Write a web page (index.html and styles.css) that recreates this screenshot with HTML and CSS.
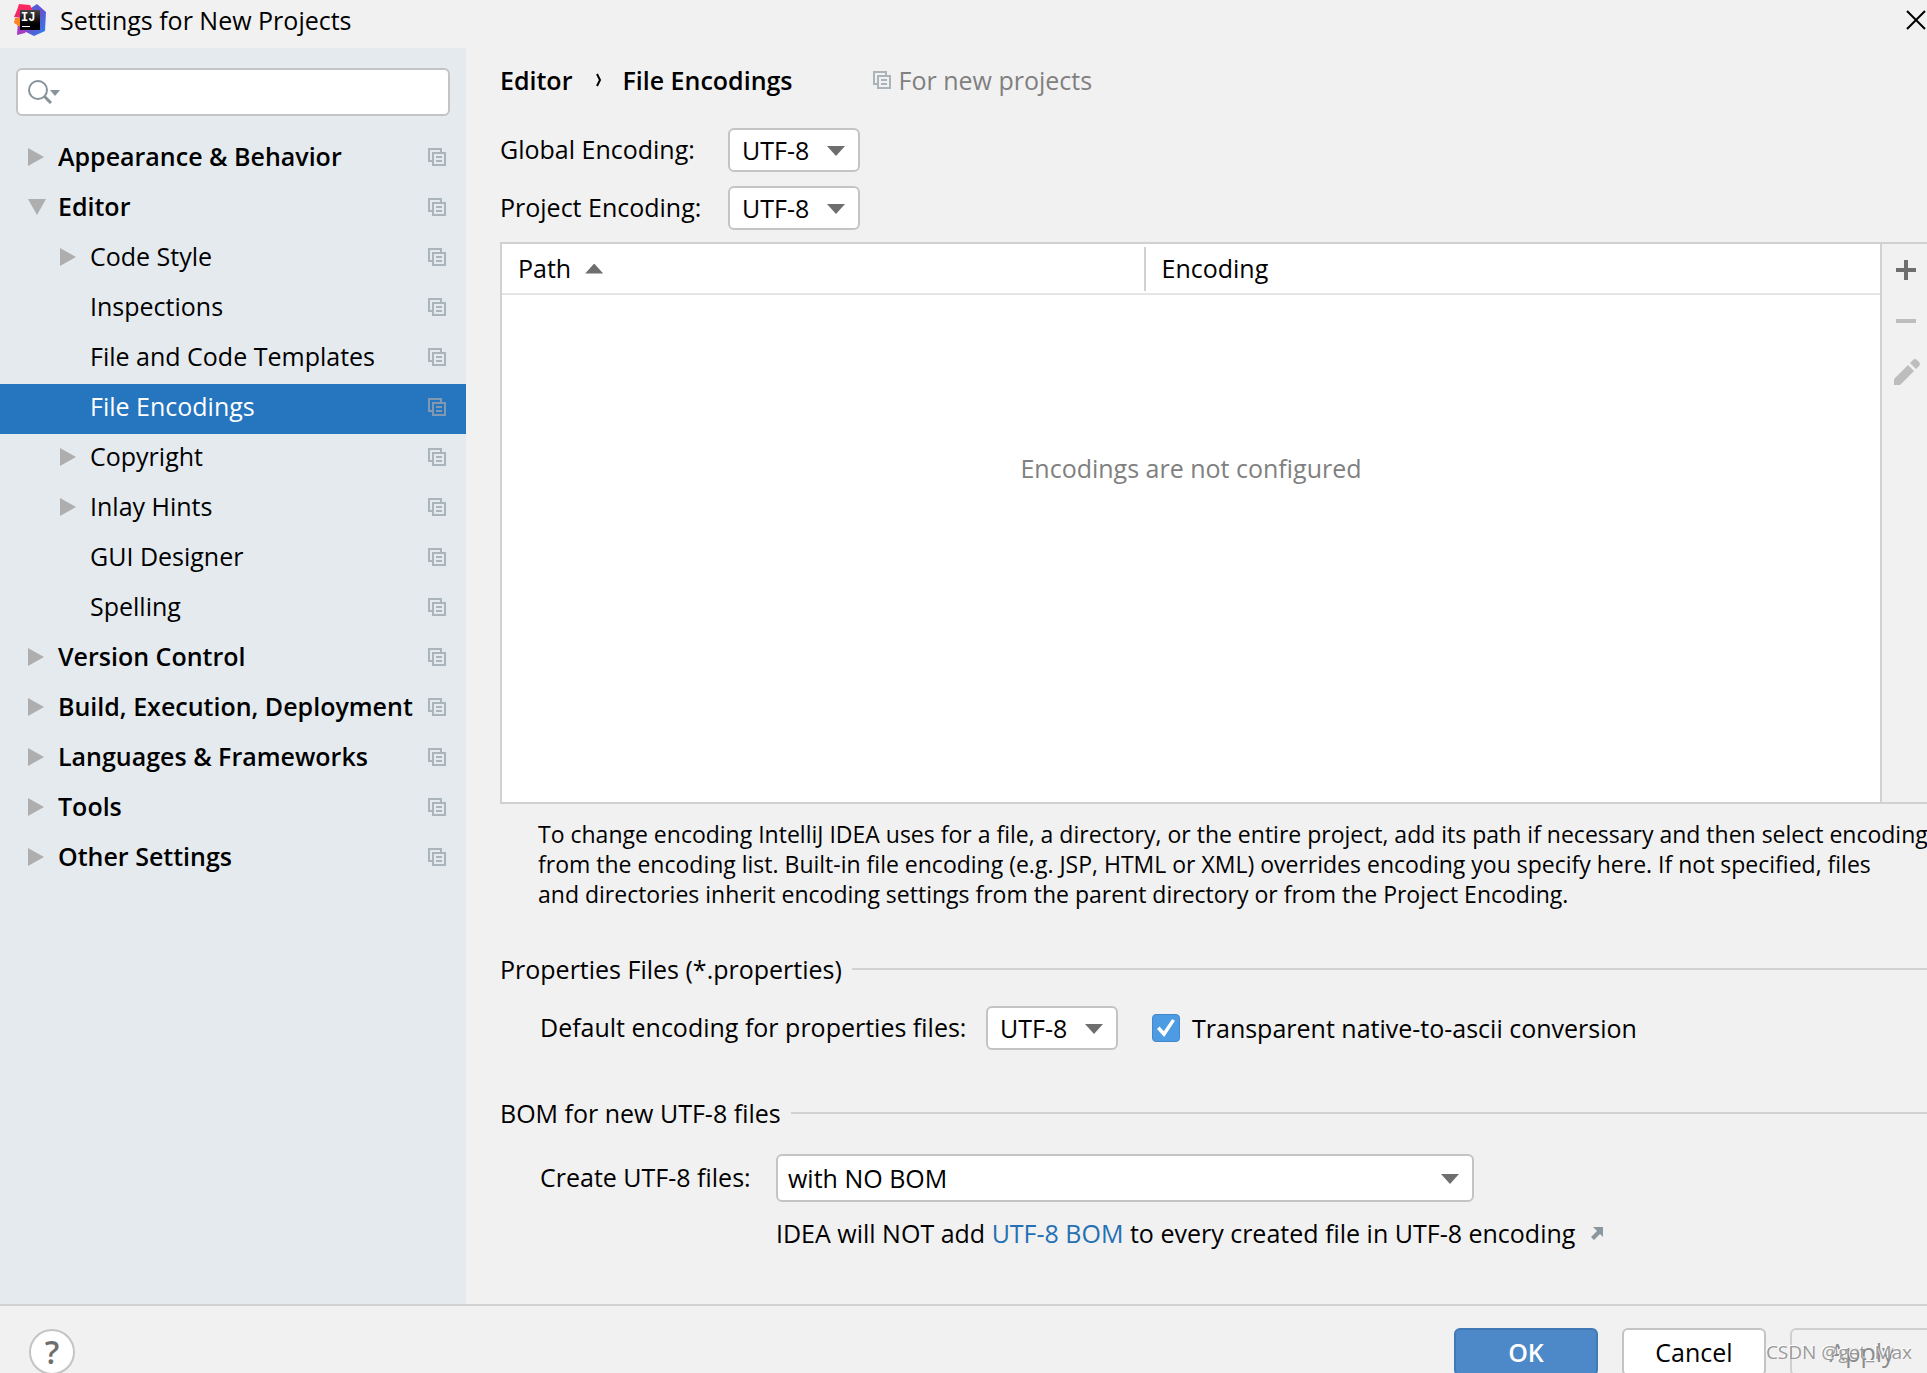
FILE: index.html
```html
<!DOCTYPE html>
<html lang="en">
<head>
<meta charset="utf-8">
<title>Settings for New Projects</title>
<link rel="stylesheet" href="styles.css">
</head>
<body>
<svg class="defs" aria-hidden="true">
  <symbol id="copy" viewBox="0 0 18 18">
    <path d="M13 4V1H1V13H4" fill="none" stroke="currentColor" stroke-width="2"/>
    <path d="M5 5H17V17H5ZM8 9H14M8 13H14" fill="none" stroke="currentColor" stroke-width="2"/>
  </symbol>
</svg>

<header class="titlebar">
  <svg class="logo" viewBox="0 0 32 32" aria-hidden="true">
    <defs>
      <linearGradient id="lgBlue" x1="0" y1="0" x2="1" y2="1"><stop offset="0" stop-color="#3b6be8"/><stop offset=".5" stop-color="#6a50d0"/><stop offset="1" stop-color="#1f86ee"/></linearGradient>
      <linearGradient id="lgRed" x1="0" y1="0" x2="0" y2="1"><stop offset="0" stop-color="#ff2a5c"/><stop offset="1" stop-color="#f0246e"/></linearGradient>
      <linearGradient id="lgBlack" x1="0" y1="0" x2="0" y2="1"><stop offset="0" stop-color="#444"/><stop offset=".7" stop-color="#000"/></linearGradient>
    </defs>
    <path d="M23 0L32 8L31 27L20 32L10 27L14 6Z" fill="url(#lgBlue)"/>
    <path d="M4 18L14 25L11 29L3 31Z" fill="#a63cc4"/>
    <path d="M1 14L8 14V24L0 19Z" fill="#fb8522"/>
    <path d="M5 0L16 1L19 7L8 14L0 13L3 6Z" fill="url(#lgRed)"/>
    <rect x="6" y="6" width="20" height="20" fill="url(#lgBlack)"/>
    <text x="7" y="17" class="logo-text">IJ</text>
    <rect x="8" y="22" width="8" height="1" fill="#fff"/>
  </svg>
  <h1 class="title">Settings for New Projects</h1>
  <button class="close" aria-label="Close">
    <svg width="20" height="20" viewBox="0 0 20 20"><path d="M1 1L19 19M19 1L1 19" stroke="#000" stroke-width="2"/></svg>
  </button>
</header>

<div class="body">
  <aside class="sidebar">
    <div class="search">
      <svg class="search-icon" width="32" height="24" viewBox="0 0 32 24" aria-hidden="true">
        <circle cx="10" cy="10" r="9" fill="none" stroke="#87939a" stroke-width="2"/>
        <path d="M16 16L23 23" stroke="#87939a" stroke-width="3"/>
        <path d="M22 10H32L27 16Z" fill="#87939a"/>
      </svg>
      <input class="search-input" type="text" aria-label="Search settings">
    </div>
    <nav class="tree">
      <a href="#" class="row group"><span class="arrow"></span><span class="name">Appearance &amp; Behavior</span><svg class="copy"><use href="#copy"/></svg></a>
      <a href="#" class="row group"><span class="arrow open"></span><span class="name">Editor</span><svg class="copy"><use href="#copy"/></svg></a>
      <a href="#" class="row child"><span class="arrow"></span><span class="name">Code Style</span><svg class="copy"><use href="#copy"/></svg></a>
      <a href="#" class="row child"><span class="arrow none"></span><span class="name">Inspections</span><svg class="copy"><use href="#copy"/></svg></a>
      <a href="#" class="row child"><span class="arrow none"></span><span class="name">File and Code Templates</span><svg class="copy"><use href="#copy"/></svg></a>
      <a href="#" class="row child selected" aria-current="page"><span class="arrow none"></span><span class="name">File Encodings</span><svg class="copy"><use href="#copy"/></svg></a>
      <a href="#" class="row child"><span class="arrow"></span><span class="name">Copyright</span><svg class="copy"><use href="#copy"/></svg></a>
      <a href="#" class="row child"><span class="arrow"></span><span class="name">Inlay Hints</span><svg class="copy"><use href="#copy"/></svg></a>
      <a href="#" class="row child"><span class="arrow none"></span><span class="name">GUI Designer</span><svg class="copy"><use href="#copy"/></svg></a>
      <a href="#" class="row child"><span class="arrow none"></span><span class="name">Spelling</span><svg class="copy"><use href="#copy"/></svg></a>
      <a href="#" class="row group"><span class="arrow"></span><span class="name">Version Control</span><svg class="copy"><use href="#copy"/></svg></a>
      <a href="#" class="row group"><span class="arrow"></span><span class="name">Build, Execution, Deployment</span><svg class="copy"><use href="#copy"/></svg></a>
      <a href="#" class="row group"><span class="arrow"></span><span class="name">Languages &amp; Frameworks</span><svg class="copy"><use href="#copy"/></svg></a>
      <a href="#" class="row group"><span class="arrow"></span><span class="name">Tools</span><svg class="copy"><use href="#copy"/></svg></a>
      <a href="#" class="row group"><span class="arrow"></span><span class="name">Other Settings</span><svg class="copy"><use href="#copy"/></svg></a>
    </nav>
  </aside>

  <main class="main">
    <div class="crumbs">
      <span class="crumb">Editor</span>
      <svg class="chevron" width="6" height="14" viewBox="0 0 6 14" aria-hidden="true"><path d="M1 1L4 7L1 13" fill="none" stroke="#000" stroke-width="2"/></svg>
      <h2 class="crumb">File Encodings</h2>
      <span class="scope"><svg class="copy"><use href="#copy"/></svg>For new projects</span>
    </div>

    <div class="encodings">
      <label class="label" for="global">Global Encoding:</label>
      <span class="combo"><select id="global"><option>UTF-8</option></select></span>
      <label class="label" for="project">Project Encoding:</label>
      <span class="combo"><select id="project"><option>UTF-8</option></select></span>
    </div>

    <div class="table-area">
      <table class="table">
        <thead><tr><th class="col-path">Path<span class="sort"></span></th><th>Encoding</th></tr></thead>
        <tbody><tr><td colspan="2">Encodings are not configured</td></tr></tbody>
      </table>
      <div class="toolbar">
        <button class="tool" aria-label="Add"><svg width="26" height="26" viewBox="0 0 26 26"><path d="M2 13H22M12 3V23" stroke="#6e6e6e" stroke-width="4"/></svg></button>
        <button class="tool" aria-label="Remove" disabled><svg width="26" height="26" viewBox="0 0 26 26"><path d="M2 13H22" stroke="#bdbdbd" stroke-width="4"/></svg></button>
        <button class="tool" aria-label="Edit" disabled><svg width="26" height="26" viewBox="0 0 26 26"><path d="M0 20L14 6L20 12L6 26H0ZM16 4L19 1Q21 -1 23 1L25 3Q27 5 25 7L22 10Z" fill="#bdbdbd"/></svg></button>
      </div>
    </div>

    <p class="note">To change encoding IntelliJ IDEA uses for a file, a directory, or the entire project, add its path if necessary and then select encoding<br>from the encoding list. Built-in file encoding (e.g. JSP, HTML or XML) overrides encoding you specify here. If not specified, files<br>and directories inherit encoding settings from the parent directory or from the Project Encoding.</p>

    <h3 class="section">Properties Files (*.properties)</h3>
    <div class="props">
      <label class="label" for="props">Default encoding for properties files:</label>
      <span class="combo"><select id="props"><option>UTF-8</option></select></span>
      <label class="check"><input type="checkbox" checked>Transparent native-to-ascii conversion</label>
    </div>

    <h3 class="section">BOM for new UTF-8 files</h3>
    <div class="bom">
      <label class="label" for="bom">Create UTF-8 files:</label>
      <span class="combo wide"><select id="bom"><option>with NO BOM</option></select></span>
      <p class="hint">IDEA will NOT add <a href="#">UTF-8 BOM</a> to every created file in UTF-8 encoding<svg class="ext" width="14" height="14" viewBox="0 0 14 14" aria-hidden="true"><path d="M3 1H13V11L10 8L4 14L1 11L7 5Z" fill="#8b979e"/></svg></p>
    </div>
  </main>
</div>

<footer class="footer">
  <button class="help" aria-label="Help">?</button>
  <div class="actions">
    <button class="btn primary">OK</button>
    <button class="btn">Cancel</button>
    <button class="btn" disabled>Apply</button>
  </div>
</footer>
<div class="watermark">CSDN @get_Max</div>
</body>
</html>
```
FILE: styles.css
```css
* { box-sizing: border-box; }

body {
  margin: 0;
  height: 100vh;
  display: flex;
  flex-direction: column;
  overflow: hidden;
  position: relative;
  background: #f1f1f1;
  color: #000;
  font: 25px/34px "Open Sans", "Noto Sans", sans-serif;
  white-space: nowrap;
}

h1, h2, h3, p { margin: 0; font-size: inherit; font-weight: 400; }
button, select, input { font: inherit; color: inherit; margin: 0; }
a { text-decoration: none; color: #2470b3; }
svg { display: block; flex: none; }
.defs { position: absolute; width: 0; height: 0; }
.copy { width: 18px; height: 18px; color: #aab4bb; }
.label { padding-bottom: 2px; }

/* Title bar */
.titlebar { display: flex; align-items: center; height: 48px; padding: 0 0 8px 14px; flex: none; }
.logo { width: 32px; height: 32px; }
.logo-text { font: bold 12px "Liberation Mono", monospace; fill: #fff; }
.title { margin-left: 14px; flex: 1; }
.close { border: 0; background: none; padding: 0; width: 21px; }

.body { display: flex; flex: 1; min-height: 0; }

/* Sidebar */
.sidebar { width: 466px; flex: none; background: #e5eaee; padding-top: 20px; }
.search {
  display: flex;
  align-items: center;
  height: 48px;
  margin: 0 16px 18px;
  padding: 0 10px;
  border: 2px solid #c4c4c4;
  border-radius: 6px;
  background: #fff;
}
.search-input { flex: 1; min-width: 0; border: 0; outline: 0; background: none; }
.row { display: flex; align-items: center; height: 50px; padding: 0 20px 4px 28px; color: #000; }
.child { padding-left: 60px; }
.group { font-weight: 600; }
.name { flex: 1; min-width: 0; padding-bottom: 2px; }
.arrow { width: 16px; height: 18px; margin-right: 14px; background: #aeaeae; clip-path: polygon(0 0, 100% 50%, 0 100%); }
.open { width: 18px; height: 16px; margin-right: 12px; clip-path: polygon(0 0, 100% 0, 50% 100%); }
.none { visibility: hidden; }
.selected { background: #2675bf; color: #fff; }
.selected .copy { color: #8099b0; }

/* Main panel */
.main { flex: 1; min-width: 0; display: flex; flex-direction: column; padding-left: 34px; }
.crumbs { display: flex; align-items: center; height: 64px; margin-bottom: 16px; }
.crumb { font-weight: 600; }
.chevron { margin: 0 20px 0 24px; }
.scope { display: flex; align-items: center; gap: 8px; margin-left: 80px; color: #808080; }

.encodings { display: grid; grid-template-columns: 228px auto; row-gap: 14px; align-items: center; margin-bottom: 12px; }

.combo { position: relative; display: block; width: 132px; height: 44px; }
.combo select {
  appearance: none;
  width: 100%;
  height: 100%;
  padding: 0 12px;
  border: 2px solid #c4c4c4;
  border-radius: 6px;
  background: #fff;
}
.combo::after {
  content: "";
  position: absolute;
  right: 15px;
  top: 50%;
  width: 18px;
  height: 10px;
  margin-top: -4px;
  background: #6e6e6e;
  clip-path: polygon(0 0, 100% 0, 50% 100%);
  pointer-events: none;
}
.wide { width: 698px; height: 48px; }
.wide select { padding: 0 10px; }

.table-area { flex: 1; min-height: 200px; display: flex; border: 2px solid #d1d1d1; border-right: 0; }
.table { flex: 1; height: 100%; border-collapse: collapse; table-layout: fixed; background: #fff; }
.table th { height: 50px; padding: 0 16px 2px; text-align: left; font-weight: 400; border-bottom: 2px solid #e5e5e5; }
.col-path { width: 46.7%; background: linear-gradient(#d1d1d1, #d1d1d1) right center / 2px 44px no-repeat; }
.sort { display: inline-block; width: 18px; height: 10px; margin: 0 0 4px 14px; background: #6e6e6e; clip-path: polygon(50% 0, 100% 100%, 0 100%); }
.table td { padding: 156px 0 0; vertical-align: top; text-align: center; color: #808080; }
.toolbar { width: 47px; flex: none; display: flex; flex-direction: column; gap: 25px; padding: 13px 0 0 12px; border-left: 2px solid #d1d1d1; }
.tool { width: 26px; height: 26px; padding: 0; border: 0; background: none; }

.note { margin: 15px 0 43px 38px; font-size: 23px; line-height: 30px; }

.section { display: flex; align-items: center; gap: 10px; }
.section::after { content: ""; flex: 1; height: 2px; background: #d1d1d1; }
.props { display: grid; grid-template-columns: 446px 166px auto; align-items: center; margin: 20px 0 46px 40px; }
.check { display: flex; align-items: center; gap: 12px; }
.check input {
  appearance: none;
  width: 28px;
  height: 28px;
  border: 1px solid #4389cf;
  border-radius: 4px;
  background: #4d9be3;
  display: grid;
  place-items: center;
}
.check input::before { content: ""; width: 18px; height: 18px; background: #fff; clip-path: polygon(0 55%, 14% 42%, 38% 68%, 84% 0, 100% 10%, 40% 100%); }

.bom { display: grid; grid-template-columns: 236px auto; row-gap: 14px; align-items: center; margin: 24px 0 54px 40px; }
.hint { grid-column: 2; display: flex; align-items: center; white-space: pre; }
.ext { margin-left: 15px; }

/* Footer */
.footer { display: flex; justify-content: space-between; height: 69px; flex: none; padding: 22px 0 0 29px; border-top: 2px solid #d1d1d1; }
.help { width: 46px; height: 46px; flex: none; margin-top: 1px; padding: 0; border: 2px solid #c4c4c4; border-radius: 50%; background: #fff; color: #6e6e6e; font-size: 32px; font-weight: 600; line-height: 40px; }
.actions { display: flex; gap: 24px; margin-right: -7px; }
.btn { width: 144px; height: 48px; flex: none; padding: 0; border: 2px solid #c4c4c4; border-radius: 6px; background: #fff; }
.primary { border-color: #4079b5; background: #4d89c9; color: #fff; font-weight: 600; }
.btn:disabled { border-color: #cfcfcf; background: none; color: #8c8c8c; }

.watermark { position: absolute; right: 15px; bottom: 4px; font-size: 19px; color: #9a9a9a; text-shadow: -1px -1px 0 #fff; }
```
